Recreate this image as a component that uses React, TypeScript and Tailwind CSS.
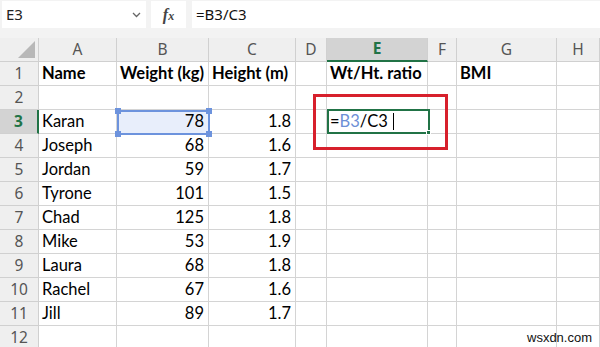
import React from "react";

const cols = [
  { key: "A", w: "w-[78px]" },
  { key: "B", w: "w-[92px]" },
  { key: "C", w: "w-[87px]" },
  { key: "D", w: "w-[31px]" },
  { key: "E", w: "w-[101px]" },
  { key: "F", w: "w-[29px]" },
  { key: "G", w: "w-[100px]" },
  { key: "H", w: "flex-1" },
];

const people: [string, number, number][] = [
  ["Karan", 78, 1.8],
  ["Joseph", 68, 1.6],
  ["Jordan", 59, 1.7],
  ["Tyrone", 101, 1.5],
  ["Chad", 125, 1.8],
  ["Mike", 53, 1.9],
  ["Laura", 68, 1.8],
  ["Rachel", 67, 1.6],
  ["Jill", 89, 1.7],
];

type Cell = { text?: string; bold?: boolean; right?: boolean };

function rowCells(r: number): Cell[] {
  const cells: Cell[] = cols.map(() => ({}));
  if (r === 1) {
    cells[0] = { text: "Name", bold: true };
    cells[1] = { text: "Weight (kg)", bold: true };
    cells[2] = { text: "Height (m)", bold: true };
    cells[4] = { text: "Wt/Ht. ratio", bold: true };
    cells[6] = { text: "BMI", bold: true };
  }
  const p = people[r - 3];
  if (p) {
    cells[0] = { text: p[0] };
    cells[1] = { text: String(p[1]), right: true };
    cells[2] = { text: p[2].toFixed(1), right: true };
  }
  return cells;
}

export default function App() {
  const rows = Array.from({ length: 12 }, (_, i) => i + 1);

  return (
    <div className="w-[600px] h-[347px] overflow-hidden bg-white relative font-['Lato',sans-serif]">
      {/* Formula bar */}
      <div className="h-[38px] bg-[#f3f3f3] flex items-start pt-px">
        <div className="ml-[2px] w-[144px] h-[27px] bg-white flex items-center justify-between pl-[4px] pr-[5px]">
          <span className="text-[15px] text-[#222] font-['Noto_Sans',sans-serif]">E3</span>
          <svg width="9" height="6" viewBox="0 0 9 6" className="text-[#666]">
            <path d="M1 1l3.5 3.5L8 1" fill="none" stroke="currentColor" strokeWidth="1.3" />
          </svg>
        </div>
        <div className="ml-[5px] w-[35px] h-[27px] bg-white flex items-center justify-center">
          <span className="italic text-[16px] font-['Liberation_Serif',serif] text-[#444] font-bold">
            f<span className="text-[12px]">x</span>
          </span>
        </div>
        <div className="ml-[6px] flex-1 h-[27px] bg-white flex items-center pl-[4px]">
          <span className="text-[15px] text-[#111] font-['Noto_Sans',sans-serif]">=B3/C3</span>
        </div>
      </div>

      {/* Grid */}
      <div className="relative">
        {/* column headers */}
        <div className="flex h-[24px] bg-[#efefef]">
          <div className="w-[39px] relative border-r border-b border-[#d0d0d0]">
            <div className="absolute right-[3px] bottom-[3px] w-0 h-0 border-l-[17px] border-l-transparent border-b-[17px] border-b-[#b8b8b8]" />
          </div>
          {cols.map((c) => {
            const sel = c.key === "E";
            return (
              <div
                key={c.key}
                className={`${c.w} flex items-center justify-center text-[15.5px] font-['Noto_Sans',sans-serif] border-r border-[#d0d0d0] ${
                  sel
                    ? "bg-[#d3d3d3] text-[#217346] font-bold border-b-2 border-b-[#217346]"
                    : "text-[#555] border-b"
                }`}
              >
                {c.key}
              </div>
            );
          })}
        </div>

        {rows.map((r) => {
          const cells = rowCells(r);
          const sel = r === 3;
          return (
            <div key={r} className="flex h-[24px]">
              <div
                className={`w-[39px] flex items-center justify-center text-[15.5px] font-['Noto_Sans',sans-serif] border-b border-[#d0d0d0] ${
                  sel
                    ? "bg-[#d3d3d3] text-[#217346] font-bold border-r-2 border-r-[#217346]"
                    : "bg-[#efefef] text-[#555] border-r"
                }`}
              >
                {r}
              </div>
              {cols.map((c, i) => {
                const cell = cells[i];
                const ref = sel && c.key === "B";
                return (
                  <div
                    key={c.key}
                    className={`${c.w} border-r border-b border-[#d4d4d4] flex items-center whitespace-nowrap text-[16.5px] text-black ${
                      cell.right ? "justify-end pr-[4px]" : "pl-[3px]"
                    } ${cell.bold ? "font-bold" : ""} ${ref ? "bg-[#e8eefb]" : ""}`}
                  >
                    {cell.text}
                  </div>
                );
              })}
            </div>
          );
        })}

        {/* B3 reference highlight */}
        <div className="absolute left-[117px] top-[72px] w-[93px] h-[25px] border-2 border-[#6d93dd] pointer-events-none">
          <div className="absolute -left-[4px] -top-[4px] w-[6px] h-[6px] bg-[#6d93dd]" />
          <div className="absolute -right-[4px] -top-[4px] w-[6px] h-[6px] bg-[#6d93dd]" />
          <div className="absolute -left-[4px] -bottom-[4px] w-[6px] h-[6px] bg-[#6d93dd]" />
          <div className="absolute -right-[4px] -bottom-[4px] w-[6px] h-[6px] bg-[#6d93dd]" />
        </div>

        {/* Active cell E3 being edited */}
        <div className="absolute left-[327px] top-[71px] w-[103px] h-[25px] border-2 border-[#217346] bg-white flex items-center pl-[1px] text-[16.5px]">
          <span className="text-black">=</span>
          <span className="text-[#6d8fd6]">B3</span>
          <span className="text-black">/C3</span>
          <span className="ml-[5px] w-px h-[17px] bg-black" />
          <div className="absolute -right-[3px] -bottom-[3px] w-[5px] h-[5px] bg-[#217346] border border-white" />
        </div>

        {/* Red callout */}
        <div className="absolute left-[313px] top-[56px] w-[135px] h-[56px] border-[3px] border-[#d7202c]" />
      </div>

      <span className="absolute left-[527px] top-[328px] text-[13px] text-[#111] font-['Liberation_Sans',sans-serif]">
        wsxdn.com
      </span>
    </div>
  );
}
